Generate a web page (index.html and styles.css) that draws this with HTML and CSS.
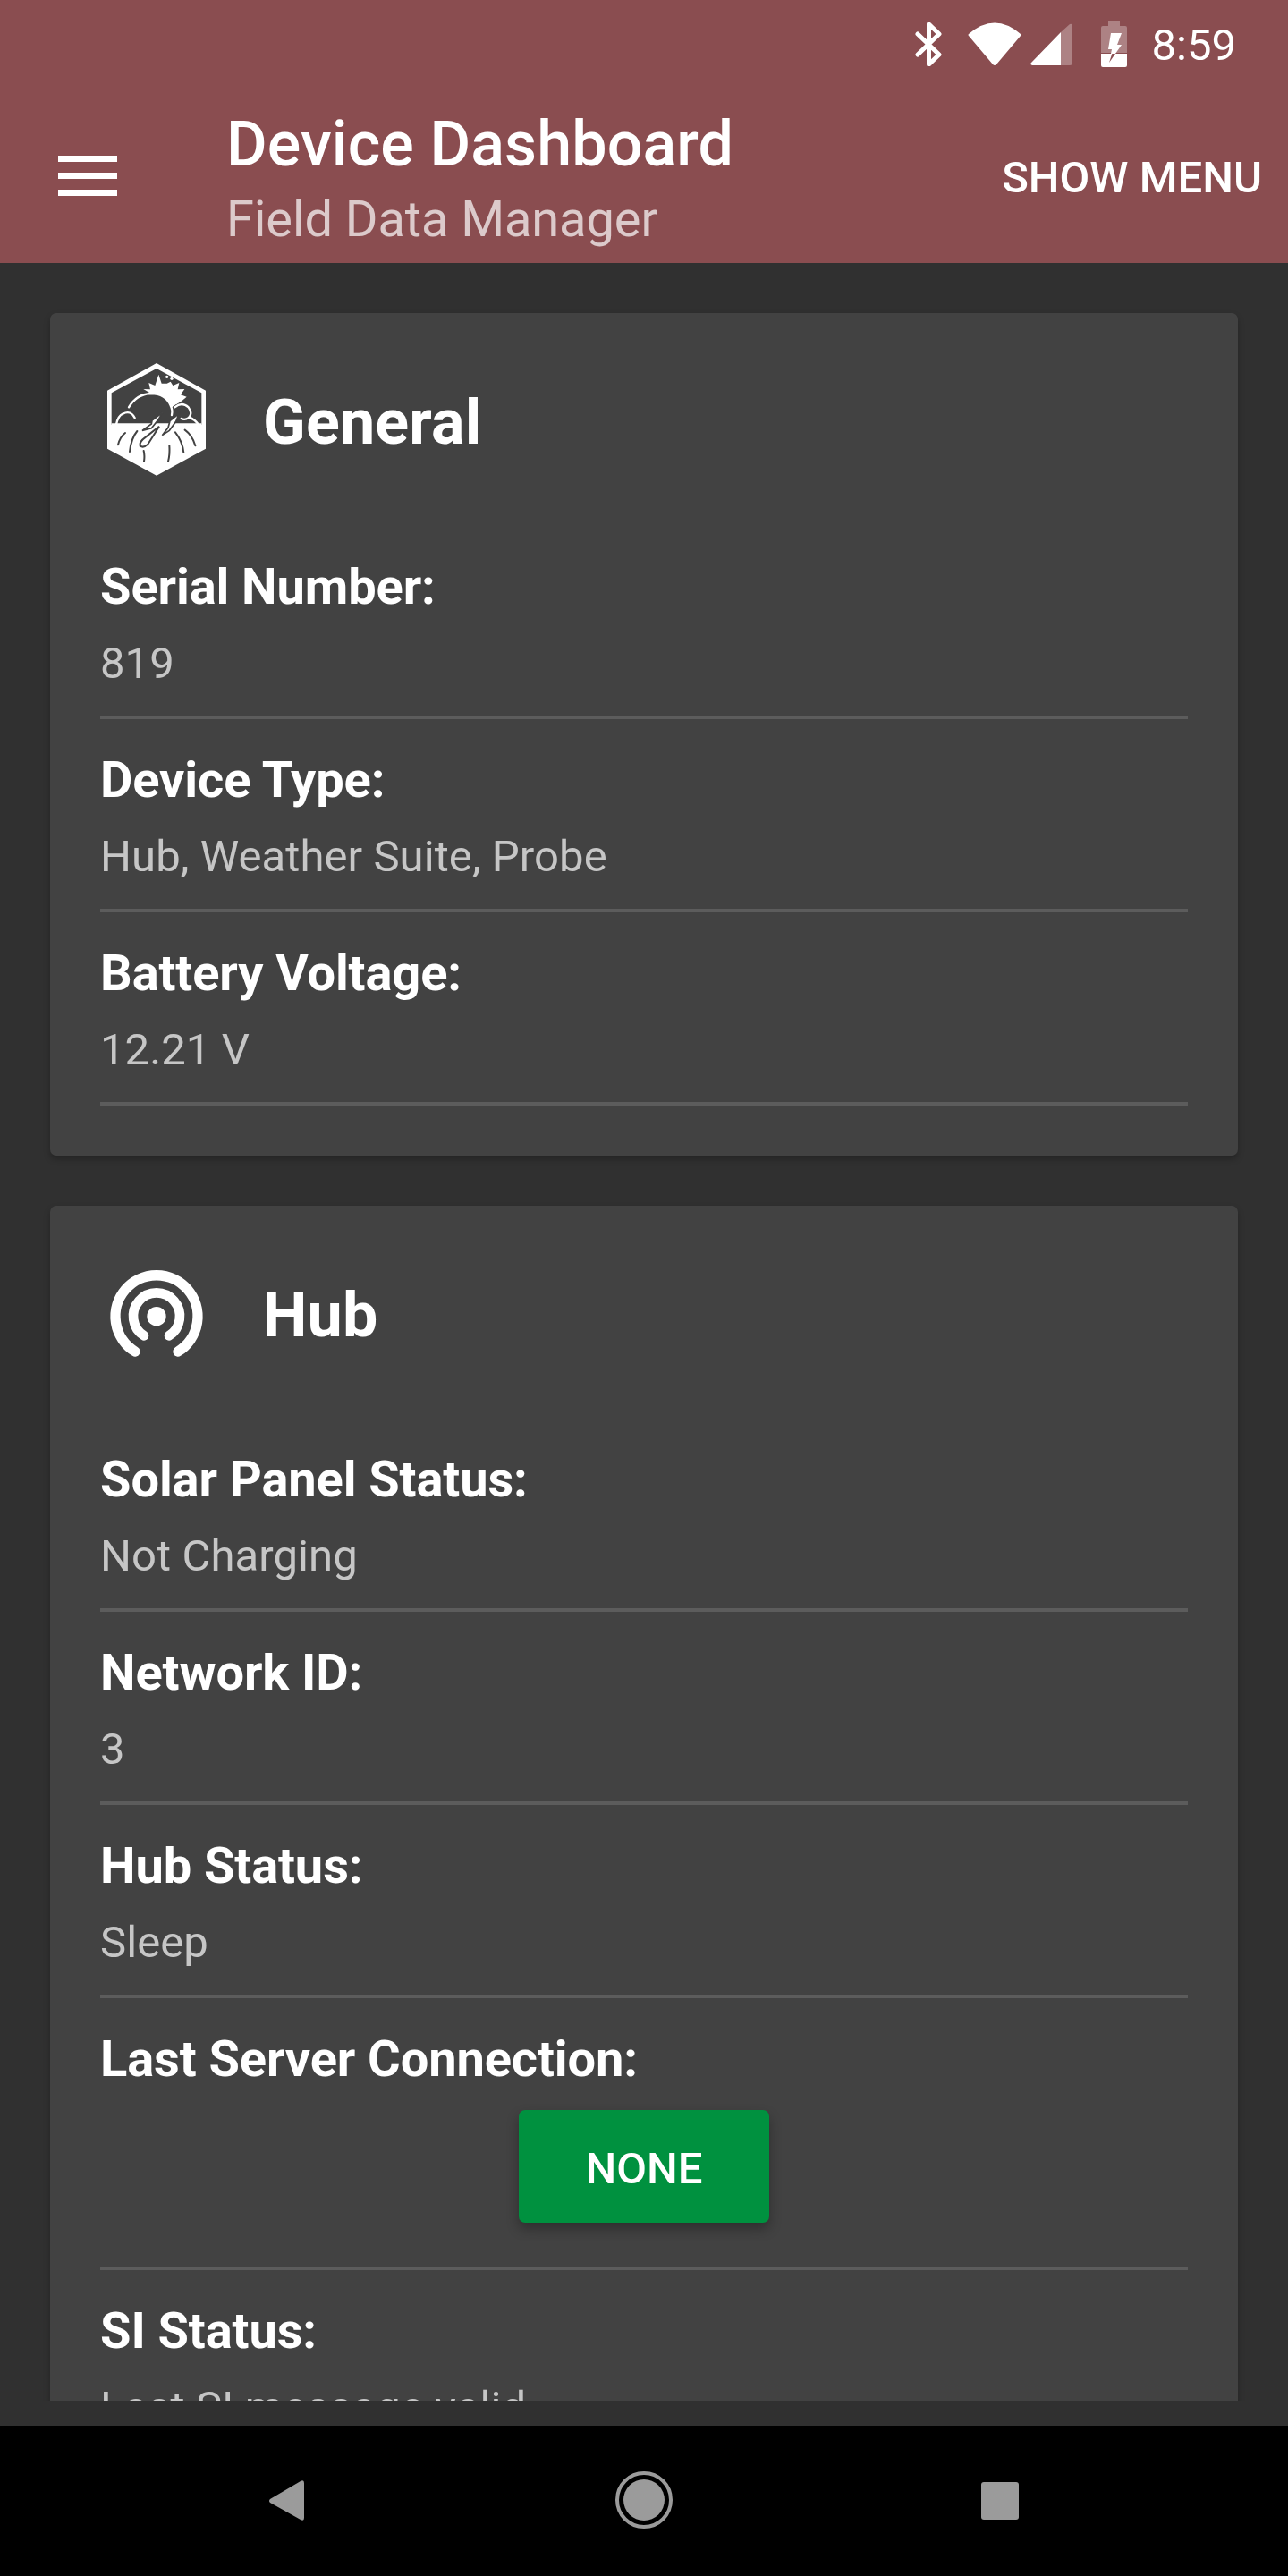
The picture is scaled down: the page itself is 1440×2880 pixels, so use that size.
FILE: index.html
```html
<!DOCTYPE html>
<html lang="en">
<head>
    <meta charset="UTF-8">
    <title>Device Dashboard</title>
    <link rel="stylesheet" href="styles.css">
</head>
<body>
    <header class="appbar">
        <div class="statusbar">
            <svg class="status-icon bt" viewBox="0 0 31 49"><path d="M3 13 L27 36 L15.500 47 L15.500 2 L27 13 L3 36" fill="none" stroke="#fff" stroke-width="5" stroke-linecap="round" stroke-linejoin="round"/></svg>
            <svg class="status-icon wifi" viewBox="0 0 60 48"><path d="M1 13 Q30 -12 59 13 Q60 14 59 15 L32 47 Q30 49 28 47 L1 15 Q0 14 1 13 Z" fill="#fff"/></svg>
            <svg class="status-icon signal" viewBox="0 0 47 47"><path d="M34 10 L44 1 Q47 0 47 3 L47 44 Q47 47 44 47 L34 47 Z" fill="#fff" opacity="0.3"/><path d="M34 10 L34 47 L2 47 Q-1 46 1 44 Z" fill="#fff"/></svg>
            <svg class="status-icon battery" viewBox="0 0 29 51"><path d="M8 0 H21 V5 H27 Q29 5 29 7 V35 H0 V7 Q0 5 2 5 H8 Z" fill="#fff" opacity="0.3"/><path d="M0 36 H29 V49 Q29 51 27 51 H2 Q0 51 0 49 Z" fill="#fff"/><path d="M11 13 H23 L18 26 H23 L9 46 L12 31 H8 Z" fill="#fff"/><path d="M9 46 L12.300 36 H16 Z" fill="#8a4d50"/></svg>
            <span class="clock">8:59</span>
        </div>
        <div class="toolbar">
            <div class="hamburger"><span></span><span></span><span></span></div>
            <div class="toolbar-titles">
                <div class="toolbar-title">Device Dashboard</div>
                <div class="toolbar-subtitle">Field Data Manager</div>
            </div>
            <div class="toolbar-action">SHOW MENU</div>
        </div>
    </header>

    <main class="content">
        <section class="card">
            <div class="card-head">
                <svg class="card-icon" viewBox="66 27 420 420">
                    <path d="M255 48 L420 140 V335 L255 425 L90 335 V140 Z" fill="#fff"/>
                    <path d="M255 66 L406 148 V254 H104 V148 Z" fill="#424242"/>
                    <path d="M211 135 L234 136 L229 114 L250 123 L262 86 L272 116 L290 116 L302 110 L310 123 L331 114 L326 136 L349 135 L336 154 L356 161 L340 175 L300 200 L240 152 Z" fill="#fff"/>
                    <circle cx="290" cy="94" r="5" fill="#fff"/>
                    <circle cx="306" cy="100" r="5" fill="#fff"/>
                    <path d="M120 254 Q124 226 140 220 Q158 204 172 216 Q174 168 236 150 Q290 152 304 200 Q322 178 350 186 Q374 204 368 232 Q384 238 396 254 Z" fill="#424242"/>
                    <path d="M120 254 Q126 224 142 218 Q168 204 182 232 M162 196 Q188 152 236 150 Q286 150 302 190 Q310 205 306 222 M316 196 Q340 176 362 196 Q378 218 362 232 Q350 240 338 234 M366 230 Q384 238 396 254" fill="none" stroke="#fff" stroke-width="7" stroke-linecap="round"/>
                    <path d="M104 250 H406 V262 H104 Z" fill="#fff"/>
                    <path d="M150 282 Q132 296 126 322 M190 276 Q170 300 165 345 M212 342 Q216 360 213 378 M298 325 Q300 355 294 378 M318 280 Q342 310 346 348 M350 272 Q375 290 385 325" fill="none" stroke="#424242" stroke-width="6" stroke-linecap="round"/>
                    <path d="M275 214 L240 240 L238 252 L207 274 L238 266 L262 236 Z" fill="#fff" stroke="#424242" stroke-width="5"/>
                    <path d="M330 218 L300 242 L294 264 L274 290 L298 274 L320 244 Z" fill="#fff" stroke="#424242" stroke-width="5"/>
                    <path d="M264 260 L216 298 Q196 312 200 326 Q212 334 226 320 Z" fill="#fff" stroke="#424242" stroke-width="6"/>
                </svg>
                <h2 class="card-title">General</h2>
            </div>
            <div class="row">
                <div class="row-label">Serial Number:</div>
                <div class="row-value">819</div>
            </div>
            <div class="row">
                <div class="row-label">Device Type:</div>
                <div class="row-value">Hub, Weather Suite, Probe</div>
            </div>
            <div class="row">
                <div class="row-label">Battery Voltage:</div>
                <div class="row-value">12.21 V</div>
            </div>
        </section>

        <section class="card">
            <div class="card-head">
                <svg class="card-icon" viewBox="66 21 420 420">
                    <circle cx="255" cy="245" r="32" fill="#fff"/>
                    <path d="M213 310 A78 78 0 1 1 297 310" fill="none" stroke="#fff" stroke-width="32" stroke-linecap="round"/>
                    <path d="M183 363 A138 138 0 1 1 327 363" fill="none" stroke="#fff" stroke-width="34" stroke-linecap="round"/>
                </svg>
                <h2 class="card-title">Hub</h2>
            </div>
            <div class="row">
                <div class="row-label">Solar Panel Status:</div>
                <div class="row-value">Not Charging</div>
            </div>
            <div class="row">
                <div class="row-label">Network ID:</div>
                <div class="row-value">3</div>
            </div>
            <div class="row">
                <div class="row-label">Hub Status:</div>
                <div class="row-value">Sleep</div>
            </div>
            <div class="row row-action">
                <div class="row-label">Last Server Connection:</div>
                <button class="status-button">NONE</button>
            </div>
            <div class="row">
                <div class="row-label">SI Status:</div>
                <div class="row-value">Last SI message valid</div>
            </div>
        </section>
    </main>

    <nav class="navbar">
        <svg class="nav-back" viewBox="0 0 39 45"><path d="M1 21 L35 1 Q39 -1 39 3 V42 Q39 46 35 44 L1 25 Q-1 23 1 21 Z" fill="#9b9b9b"/></svg>
        <div class="nav-home"><span></span></div>
        <div class="nav-square"></div>
    </nav>
</body>
</html>
```

FILE: styles.css
```css
*{
    box-sizing:border-box;
}
html, body{
    margin:0;
    height:2880px;
}
body{
    display:flex;
    flex-direction:column;
    background-color:#303030;
    font-family:Roboto, "Liberation Sans", sans-serif;
    color:#fff;
    overflow:hidden;
}
.appbar{
    height:294px;
    flex:none;
    background-color:#8a4d50;
}
.statusbar{
    height:98px;
    display:flex;
    align-items:center;
    padding-right:58px;
    justify-content:flex-end;
}
.status-icon{
    display:block;
    flex:none;
}
.bt{
    width:31px;
    height:49px;
    margin-right:28px;
}
.wifi{
    width:60px;
    height:48px;
    margin-right:10px;
}
.signal{
    width:47px;
    height:47px;
    margin-right:32px;
}
.battery{
    width:29px;
    height:51px;
    margin-right:28px;
}
.clock{
    font-size:49px;
    line-height:56px;
    margin-top:4px;
}
.toolbar{
    height:196px;
    display:flex;
    align-items:center;
    padding-left:65px;
    padding-right:29px;
}
.hamburger{
    width:66px;
    margin-right:122px;
    display:flex;
    flex-direction:column;
    gap:12px;
}
.hamburger span{
    display:block;
    height:7px;
    background-color:#fff;
}
.toolbar-titles{
    flex:1;
    padding-top:14px;
}
.toolbar-title{
    font-size:70px;
    font-weight:500;
    line-height:84px;
    letter-spacing:0.1px;
}
.toolbar-subtitle{
    font-size:56px;
    line-height:84px;
    letter-spacing:-0.1px;
    color:rgba(255,255,255,0.7);
}
.toolbar-action{
    font-size:49px;
    font-weight:500;
    margin-top:4px;
}
.content{
    flex:1;
    min-height:0;
    margin-bottom:28px;
    padding:56px 56px 0;
    overflow:hidden;
}
.card{
    background-color:#424242;
    border-radius:7px;
    padding:49px 56px 56px;
    margin-bottom:56px;
    box-shadow:0 4px 7px rgba(0,0,0,0.25);
}
.card-head{
    display:flex;
    align-items:center;
    gap:42px;
    margin-bottom:49px;
}
.card-icon{
    width:140px;
    height:140px;
    flex:none;
}
.card-title{
    margin:0;
    padding-top:5px;
    font-size:70px;
    font-weight:700;
    letter-spacing:0.2px;
}
.row{
    padding-top:35px;
    height:216px;
    border-bottom:4px solid #5c5c5c;
}
.row-action{
    height:304px;
    text-align:center;
}
.row-label{
    font-size:56px;
    font-weight:700;
    line-height:66px;
    letter-spacing:-0.1px;
    text-align:left;
}
.row-value{
    margin-top:20px;
    font-size:49px;
    line-height:66px;
    letter-spacing:0.08px;
    color:rgba(255,255,255,0.7);
}
.status-button{
    display:block;
    margin:24px auto 0;
    width:280px;
    height:126px;
    border:0;
    border-radius:7px;
    padding:4px 0 0;
    background-color:#00913f;
    color:#fff;
    font-family:inherit;
    font-size:49px;
    font-weight:500;
    box-shadow:0 7px 14px rgba(0,0,0,0.3);
}
.navbar{
    height:168px;
    flex:none;
    background-color:#000;
    position:relative;
}
.nav-back, .nav-home, .nav-square{
    position:absolute;
}
.nav-back{
    left:301px;
    top:61px;
    width:39px;
    height:45px;
}
.nav-home{
    left:688px;
    top:51px;
    width:64px;
    height:64px;
    border:4px solid #9b9b9b;
    border-radius:50%;
    padding:5px;
}
.nav-home span{
    display:block;
    width:100%;
    height:100%;
    border-radius:50%;
    background-color:#9b9b9b;
}
.nav-square{
    left:1097px;
    top:63px;
    width:42px;
    height:42px;
    border-radius:3px;
    background-color:#9b9b9b;
}
```
